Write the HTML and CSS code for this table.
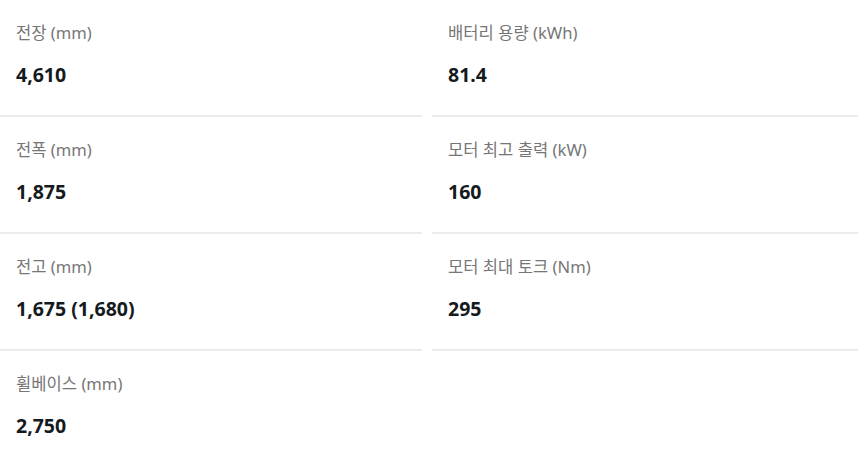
FILE: index.html
```html
<!DOCTYPE html>
<html lang="ko">
<head>
<meta charset="utf-8">
<title>사양</title>
<link rel="stylesheet" href="styles.css">
</head>
<body>
<div class="specs">
  <div class="col col-left">
    <div class="item"><div class="label">전장 (mm)</div><div class="value">4,610</div></div>
    <div class="item"><div class="label">전폭 (mm)</div><div class="value">1,875</div></div>
    <div class="item"><div class="label">전고 (mm)</div><div class="value">1,675 (1,680)</div></div>
    <div class="item item-last"><div class="label">휠베이스 (mm)</div><div class="value">2,750</div></div>
  </div>
  <div class="col col-right">
    <div class="item"><div class="label">배터리 용량 (kWh)</div><div class="value">81.4</div></div>
    <div class="item"><div class="label">모터 최고 출력 (kW)</div><div class="value">160</div></div>
    <div class="item"><div class="label">모터 최대 토크 (Nm)</div><div class="value">295</div></div>
  </div>
</div>
</body>
</html>
```
FILE: styles.css
```css
html, body {
  margin: 0;
  padding: 0;
  background: #ffffff;
}
body {
  font-family: "Noto Sans", "Noto Sans CJK KR", sans-serif;
  width: 858px;
  height: 465px;
  overflow: hidden;
}
.specs {
  display: flex;
  gap: 10px;
  align-items: flex-start;
}
.col-left {
  width: 422px;
}
.col-right {
  width: 426px;
}
.col {
  display: flex;
  flex-direction: column;
}
.item {
  height: 115px;
  box-sizing: content-box;
  border-bottom: 2px solid #ebebeb;
  padding: 0 16px;
  display: flex;
  flex-direction: column;
}
.item-last {
  border-bottom: none;
}
.label {
  margin-top: 21px;
  font-size: 16.6px;
  line-height: 24px;
  color: #767676;
}
.value {
  margin-top: 17px;
  font-size: 19.5px;
  line-height: 26px;
  font-weight: 700;
  color: #151a1e;
}
```
